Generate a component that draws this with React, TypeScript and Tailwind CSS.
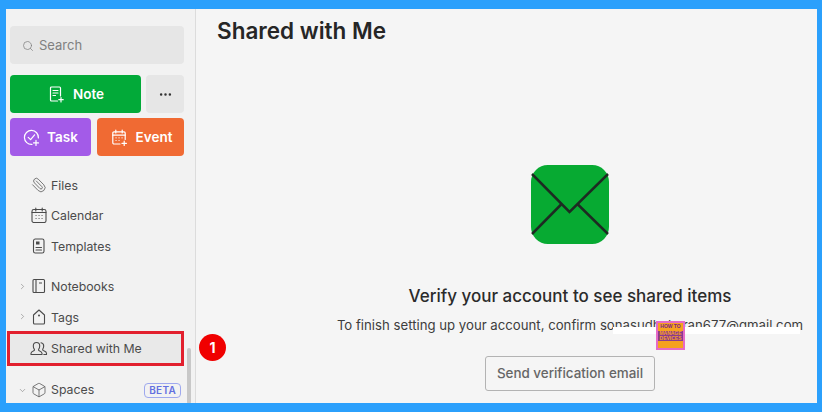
import { ChevronDown, ChevronRight, Ellipsis, Paperclip, Search, Box } from 'lucide-react';

function NoteIcon() {
  return (
    <svg width="16" height="17" viewBox="0 0 16 17" fill="none" stroke="currentColor" strokeWidth="1.2" strokeLinecap="round">
      <path d="M8.500 15H2.500a1 1 0 0 1-1-1V2a1 1 0 0 1 1-1h8a1 1 0 0 1 1 1v8" />
      <path d="M4 4.500h5M4 7h5M4 9.500h2.500" />
      <path d="M12 11.500v4.500M9.800 13.700h4.400" />
    </svg>
  );
}

function TaskIcon() {
  return (
    <svg width="17" height="17" viewBox="0 0 17 17" fill="none" stroke="currentColor" strokeWidth="1.2" strokeLinecap="round" strokeLinejoin="round">
      <path d="M9 15.400A7 7 0 1 1 15.400 9" />
      <path d="M5.200 8.400 7.600 10.600 11.600 5.800" />
      <path d="M13 11.400v5M10.500 13.900h5" />
    </svg>
  );
}

function EventIcon() {
  return (
    <svg width="17" height="17" viewBox="0 0 17 17" fill="none" stroke="currentColor" strokeWidth="1.2" strokeLinecap="round">
      <path d="M9 15H3a1.200 1.200 0 0 1-1.200-1.200V4A1.200 1.200 0 0 1 3 2.800h10A1.200 1.200 0 0 1 14.200 4v6.500" />
      <path d="M4.800 1v3M11.200 1v3M1.800 6.200h12.400" />
      <path d="M5 8.800h.1M8 8.800h.1M11 8.800h.1M5 11.500h.1M8 11.500h.1" />
      <path d="M13.200 12v4.600M10.900 14.300h4.600" />
    </svg>
  );
}

function CalendarIcon() {
  return (
    <svg width="16" height="16" viewBox="0 0 16 16" fill="none" stroke="currentColor" strokeWidth="1.100" strokeLinecap="round">
      <rect x="1" y="2.500" width="14" height="13" rx="1.800" />
      <path d="M4.800 1v3M11.200 1v3M1 5.500h14" />
      <path d="M5 8.500h.1M8 8.500h.1M11 8.500h.1M5 11.500h.1M8 11.500h.1M11 11.500h.1" />
    </svg>
  );
}

function TemplateIcon() {
  return (
    <svg width="16" height="16" viewBox="0 0 16 16" fill="none" stroke="currentColor" strokeWidth="1.100" strokeLinecap="round">
      <rect x="2.500" y="1" width="10.500" height="14" rx="1.800" />
      <rect x="5" y="3.500" width="3.500" height="3" fill="currentColor" stroke="none" />
      <path d="M5 9.500h5.500M5 12h5.500" />
    </svg>
  );
}

function NotebookIcon() {
  return (
    <svg width="16" height="16" viewBox="0 0 16 16" fill="none" stroke="currentColor" strokeWidth="1.100">
      <rect x="2" y="1.500" width="11.500" height="13" rx="1" />
      <path d="M5 1.500v13M8 5h3" />
    </svg>
  );
}

function TagIcon() {
  return (
    <svg width="16" height="16" viewBox="0 0 16 16" fill="none" stroke="currentColor" strokeWidth="1.100" strokeLinejoin="round">
      <path d="M8 1 13.500 6v8a1 1 0 0 1-1 1h-9a1 1 0 0 1-1-1V6Z" />
      <circle cx="8" cy="6.500" r="1" fill="currentColor" stroke="none" />
    </svg>
  );
}

function SharedIcon() {
  return (
    <svg width="18" height="15" viewBox="0 0 18 15" fill="none" stroke="currentColor" strokeWidth="1.100" strokeLinecap="round" strokeLinejoin="round">
      <path d="M1 13.500v-1.200c0-1.500 1.300-2 2.800-2.600.6-.3.800-.8.600-1.400C3.700 7.400 3.300 6.200 3.300 4.900 3.300 2.800 4.700 1.500 6.500 1.500s3.200 1.300 3.200 3.400c0 1.300-.4 2.500-1.100 3.400-.2.600 0 1.100.6 1.400 1.500.6 2.800 1.100 2.800 2.600v1.200Z" />
      <path d="M11 1.700c1.600.2 2.700 1.400 2.700 3.300 0 1.200-.4 2.300-1 3.200-.2.600 0 1.100.6 1.400 1.400.6 3.200 1.100 3.200 2.700v1.200h-2.700" />
    </svg>
  );
}

function NavRow({ icon, label }: { icon: React.ReactNode; label: string }) {
  return (
    <div className="flex h-[30.5px] items-center pl-[25px] text-[#4b4b4b]">
      <span className="mr-[4px] flex w-[16px] shrink-0 justify-center">{icon}</span>
      <span className="pt-[2px]">{label}</span>
    </div>
  );
}

function TreeRow({ icon, label }: { icon: React.ReactNode; label: string }) {
  return (
    <div className="flex h-[30.5px] items-center pl-[12px] text-[#4b4b4b]">
      <ChevronRight size={9} strokeWidth={1.5} className="mr-[4px] text-[#777]" />
      <span className="mr-[4px] flex w-[16px] shrink-0 justify-center">{icon}</span>
      <span className="pt-[2px]">{label}</span>
    </div>
  );
}

export default function App() {
  return (
    <div className="relative h-[412px] w-[822px] overflow-hidden bg-[#2ba0fc] pb-[9px] pl-[6px] pr-[5px] pt-[9px] font-['Inter',sans-serif]">
      <div className="flex h-full bg-[#f5f5f5]">
        {/* Sidebar */}
        <aside className="relative h-full w-[190px] shrink-0 overflow-hidden border-r border-[#dcdcdc] bg-[#f2f2f2] text-[12.3px]">
          <div className="pl-[4px] pr-[11px] pt-[17px] text-[13.5px]">
            <div className="flex h-[38px] items-center rounded-[4px] bg-[#e6e6e6] pl-[12px] pt-[1px] text-[13px] text-[#808080]">
              <Search size={12} strokeWidth={1.5} className="mr-[5px]" />
              <span>Search</span>
            </div>
            <div className="mt-[11px] flex gap-[5px]">
              <div className="flex h-[38px] w-[131px] items-center justify-center gap-[8px] rounded-[4px] bg-[#02aa39] pl-[2px] font-semibold text-white">
                <NoteIcon />
                <span>Note</span>
              </div>
              <div className="flex h-[38px] flex-1 items-center justify-center rounded-[4px] bg-[#e6e6e6] text-[#333]">
                <Ellipsis size={15} />
              </div>
            </div>
            <div className="mt-[5px] flex gap-[6px]">
              <div className="flex h-[38px] w-[81px] items-center justify-center gap-[7px] rounded-[4px] bg-[#a35be8] font-semibold text-white">
                <TaskIcon />
                <span>Task</span>
              </div>
              <div className="flex h-[38px] flex-1 items-center justify-center gap-[8px] rounded-[4px] bg-[#f06a33] pl-[2px] font-semibold text-white">
                <EventIcon />
                <span>Event</span>
              </div>
            </div>
          </div>

          <div className="mt-[13.5px]">
            <NavRow icon={<Paperclip size={16} strokeWidth={1.1} className="-scale-x-100" />} label="Files" />
            <NavRow icon={<CalendarIcon />} label="Calendar" />
            <NavRow icon={<TemplateIcon />} label="Templates" />
          </div>

          <div className="mt-[10px]">
            <TreeRow icon={<NotebookIcon />} label="Notebooks" />
            <TreeRow icon={<TagIcon />} label="Tags" />
          </div>

          <div className="ml-px mt-[-1px] flex h-[35px] w-[177px] items-center border-[3px] border-[#e2202e] bg-[#e9e9e9] pl-[20px] text-[#4b4b4b]">
            <span className="mr-[3px] flex w-[18px] shrink-0 justify-center">
              <SharedIcon />
            </span>
            <span className="pt-[1px]">Shared with Me</span>
          </div>

          <div className="mt-[9px] flex h-[30px] items-center pl-[12px] text-[#4b4b4b]">
            <ChevronDown size={9} strokeWidth={1.5} className="mr-[4px] text-[#777]" />
            <span className="mr-[4px] flex w-[16px] shrink-0 justify-center">
              <Box size={16} strokeWidth={1.1} />
            </span>
            <span>Spaces</span>
            <span className="ml-[50px] flex h-[15px] items-center rounded-[4px] border border-[#9ea8ee] px-[4px] text-[10px] font-semibold tracking-[0.3px] text-[#6370e0]">
              BETA
            </span>
          </div>

          {/* scrollbar */}
          <div className="absolute left-[181px] top-[339px] h-[56px] w-[4px] rounded-full bg-[#c8c8c8]" />
        </aside>

        {/* Main */}
        <main className="h-full min-w-0 flex-1">
          <h1 className="pl-[21px] pt-[8px] text-[22.5px] font-semibold leading-[28px] text-[#262626]">Shared with Me</h1>
          <div className="flex flex-col items-center pl-[127px]">
            <svg width="78" height="79" viewBox="0 0 79 79" preserveAspectRatio="none" className="mt-[120px]">
              <rect width="79" height="79" rx="17" fill="#07aa32" />
              <path d="M1 9 L39 47 L78 9" fill="none" stroke="#1d2b22" strokeWidth="2.5" />
              <path d="M31 39 L1 69 M47 39 L78 69" fill="none" stroke="#1d2b22" strokeWidth="2.5" />
            </svg>
            <h2 className="mt-[41px] whitespace-nowrap text-[17px] font-medium leading-[22px] text-[#2b2b2b]">
              Verify your account to see shared items
            </h2>
            <p className="mt-[9px] whitespace-nowrap text-[13.2px] leading-[18px] text-[#3d3d3d]">
              To finish setting up your account, confirm sonasudhakaran677@gmail.com
            </p>
            <div className="mt-[22px] flex h-[35px] w-[170px] items-center justify-center rounded-[3px] border border-[#b3b3b3] text-[13.4px] font-medium text-[#666]">
              Send verification email
            </div>
          </div>
        </main>
      </div>

      {/* Annotation number */}
      <div className="absolute left-[199px] top-[334px] flex h-[27px] w-[27px] items-center justify-center rounded-full bg-[#f00000] text-[14px] font-bold text-white">
        1
      </div>

      {/* White strip over the address */}
      <div className="absolute left-[613px] top-[327px] h-[7px] w-[187px] bg-white" />

      {/* Watermark */}
      <div className="absolute left-[656px] top-[321px] flex h-[29px] w-[29px] flex-col items-center border-2 border-[#e66ac6] bg-[#f6a11f] font-['Liberation_Sans',sans-serif] font-bold leading-none">
        <span className="mt-[1px] text-[5px] text-[#7a1f8a]">HOW TO</span>
        <div className="mt-[2px] flex w-full flex-col items-center bg-[#8a3a8f] text-[5px] text-[#f6a11f]">
          <span>MANAGE</span>
          <span>DEVICES</span>
        </div>
      </div>
    </div>
  );
}
